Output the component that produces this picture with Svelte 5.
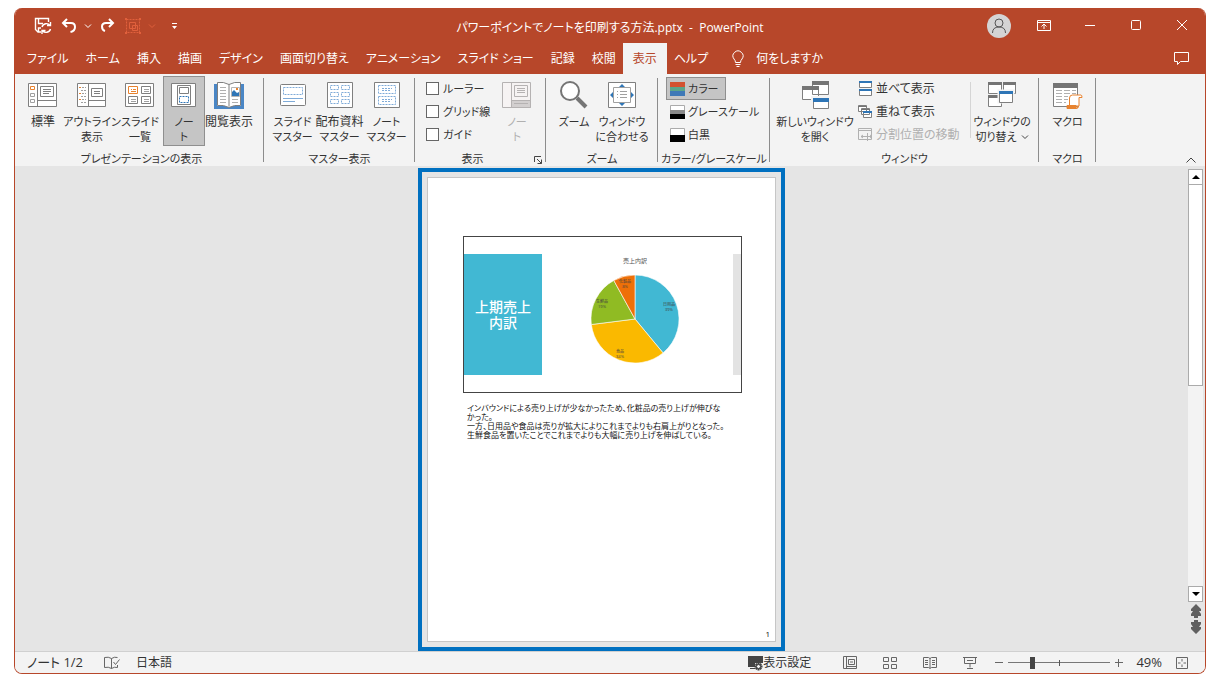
<script lang="ts">
	interface Tool {
		icon: string;
		lines: string[];
		size: string;
		active?: boolean;
		disabled?: boolean;
		menu?: boolean;
	}

	interface Slice {
		name: string;
		share: number;
		color: string;
		x: number;
		y: number;
	}

	const tabs = ['ファイル', 'ホーム', '挿入', '描画', 'デザイン', '画面切り替え', 'アニメーション', 'スライド ショー', '記録', '校閲', '表示', 'ヘルプ'];

	const viewTools: Tool[] = [
		{ icon: 'normal', lines: ['標準'], size: 'm' },
		{ icon: 'outline', lines: ['アウトライン', '表示'], size: 'l' },
		{ icon: 'sorter', lines: ['スライド', '一覧'], size: 's' },
		{ icon: 'notes', lines: ['ノー', 'ト'], size: 'xs', active: true },
		{ icon: 'reading', lines: ['閲覧表示'], size: 'm' }
	];

	const masterTools: Tool[] = [
		{ icon: 'slideMaster', lines: ['スライド', 'マスター'], size: 's' },
		{ icon: 'handoutMaster', lines: ['配布資料', 'マスター'], size: 'm' },
		{ icon: 'notesMaster', lines: ['ノート', 'マスター'], size: 's' }
	];

	const zoomTools: Tool[] = [
		{ icon: 'zoom', lines: ['ズーム'], size: 's' },
		{ icon: 'fit', lines: ['ウィンドウ', 'に合わせる'], size: 'l' }
	];

	const checks = ['ルーラー', 'グリッド線', 'ガイド'];

	const colorModes = [
		{ label: 'カラー', icon: 'color' },
		{ label: 'グレースケール', icon: 'gray' },
		{ label: '白黒', icon: 'mono' }
	];

	const windowTools = [
		{ label: '並べて表示', icon: 'arrange', disabled: false },
		{ label: '重ねて表示', icon: 'cascade', disabled: false },
		{ label: '分割位置の移動', icon: 'split', disabled: true }
	];

	const slices: Slice[] = [
		{ name: '日用品', share: 39, color: '#41b8d3', x: 34, y: -13 },
		{ name: '食品', share: 34, color: '#fab900', x: -15, y: 34 },
		{ name: '生鮮品', share: 19, color: '#90bb23', x: -33, y: -16 },
		{ name: '化粧品', share: 8, color: '#ee7008', x: -10, y: -36 }
	];

	const notes = [
		'インバウンドによる売り上げが少なかったため、化粧品の売り上げが伸びな\nかった。',
		'一方、日用品や食品は売りが拡大によりこれまでよりも右肩上がりとなった。',
		'生鮮食品を置いたことでこれまでよりも大幅に売り上げを伸ばしている。'
	];

	let activeTab = $state('表示');
	let colorMode = $state('カラー');
	let zoomPos = $state(22);

	function point(share: number, r: number): string {
		const a = (share / 100) * Math.PI * 2;
		return `${(Math.sin(a) * r).toFixed(2)} ${(-Math.cos(a) * r).toFixed(2)}`;
	}

	function slicePath(i: number): string {
		const start = slices.slice(0, i).reduce((sum, s) => sum + s.share, 0);
		return `M0 0L${point(start, 44)}A44 44 0 0 1 ${point(start + slices[i].share, 44)}Z`;
	}
</script>

{#snippet bigIcon(name: string)}
	<svg class="big-icon" viewBox="0 0 30 28" width="30" height="28" fill="none" stroke="#7f7f7f" aria-hidden="true">
		{#if name === 'normal'}
			<path fill="#fff" d="M.5 2.5h28v23H.5z" />
			<path d="M9.5 2.5v23M9.5 19.5h19M12.5 5.5h13v10h-13zM15 8.5h8M15 10.5h8M15 12.5h6" />
			<path stroke="#e8822e" d="M2.5 5.5h4v3h-4z" />
			<path stroke="#a0a0a0" d="M2.5 12.5h4v3h-4zM2.5 18.5h4v3h-4z" />
		{:else if name === 'outline'}
			<path fill="#fff" d="M.5 2.5h28v23H.5z" />
			<path d="M11.5 2.5v23M11.5 19.5h17M14.5 7.5h11v8h-11zM17 10.5h6M17 12.5h6" />
			<path stroke="#e8822e" d="M2 6.5h2M2 12.5h2M2 18.5h2" />
			<path stroke="#a0a0a0" stroke-dasharray="2 1" d="M5 6.5h4M4 9.5h5M5 12.5h4M4 15.5h5M5 18.5h4M4 21.5h5" />
		{:else if name === 'sorter'}
			<path fill="#fff" d="M.5 2.5h28v23H.5z" />
			<path stroke="#e8822e" d="M3.5 5.5h9v7h-9zM6 8.5h1M8 8.5h3M6 10.5h5" />
			<path d="M16.5 5.5h9v7h-9zM3.5 15.5h9v7h-9zM16.5 15.5h9v7h-9z" />
			<path stroke="#a0a0a0" d="M19 8.5h5M19 10.5h5M6 18.5h5M6 20.5h5M19 18.5h5M19 20.5h5" />
		{:else if name === 'notes'}
			<path fill="#fff" d="M2.5 2.5h24v23h-24z" />
			<path d="M8.5 4.5h13v19h-13zM10.5 6.5h9v6h-9z" />
			<path stroke="#2e75b6" stroke-dasharray="2 1" d="M10.5 15.5h9v6h-9z" />
		{:else if name === 'reading'}
			<path fill="#4a86c5" stroke="none" d="M0 3h3v22h11q1 2 2 0h11V3h3v25H0z" />
			<path fill="#fff" d="M3.5 1.5q6-1 11.5 2 5.5-3 11.5-2v23q-6-1-11.5 2-5.5-3-11.5-2zM15 3.5v22" />
			<path stroke="#b0b0b0" d="M6 6.5h6M6 9.5h6M6 12.5h6M6 15.5h6M6 18.5h6M6 21.5h6M18 18.5h6M18 21.5h6" />
			<path stroke="#b5b5b5" d="M17.5 6.5h8v9h-8z" />
			<path fill="#2e75b6" stroke="none" d="M18 15v-4l2-2 3 3 2-1v4z" />
			<path fill="#e8822e" stroke="none" d="M22 7h2v2h-2z" />
		{:else if name === 'slideMaster'}
			<rect fill="#fff" x="2.5" y="3.5" width="25" height="21" rx="1" />
			<path stroke="#7fabd8" stroke-dasharray="2 1" d="M5.5 6.5h19v7h-19z" />
			<path stroke="#7fabd8" d="M5 17.5h20M5 20.5h12" />
		{:else if name === 'handoutMaster'}
			<path fill="#fff" d="M2.5 1.5h25v25h-25z" />
			<path stroke="#7fabd8" stroke-dasharray="2 1" d="M5.5 4.5h8v4h-8zM16.5 4.5h8v4h-8zM5.5 11.5h8v4h-8zM16.5 11.5h8v4h-8zM5.5 18.5h8v4h-8zM16.5 18.5h8v4h-8z" />
		{:else if name === 'notesMaster'}
			<path fill="#fff" d="M2.5 1.5h25v25h-25z" />
			<path stroke="#7fabd8" stroke-dasharray="2 1" d="M6.5 4.5h17v8h-17zM6.5 15.5h17v8h-17zM10 7.5h10M10 9.5h8M10 18.5h10M10 20.5h8" />
		{:else if name === 'notesPane'}
			<g stroke="#b5b2b2">
				<path fill="#f6f3f3" d="M.5 1.5h28v25H.5zM9.5 1.5v25M12.5 4.5h13v11h-13zM15 7.5h8M15 9.5h8M15 11.5h8" />
				<path fill="#d2cfcf" d="M9.5 19.5h19v7h-19z" />
				<path d="M12 22.5h14" />
			</g>
		{:else if name === 'zoom'}
			<path stroke="#757575" stroke-width="4" d="M18 17l9 9" />
			<circle fill="#fff" stroke="#757575" stroke-width="2" cx="11" cy="10" r="9" />
		{:else if name === 'fit'}
			<path fill="#fff" d="M1.5 1.5h27v25h-27z" />
			<path stroke="#a0a0a0" d="M6.5 6.5h17v15h-17z" />
			<path stroke="#a0a0a0" d="M10 10.5h1M10 13.5h1M10 16.5h1M13 10.5h7M13 13.5h7M13 16.5h7" />
			<path fill="#2e75b6" stroke="none" d="M15 3l3 3h-6zM15 25l3-3h-6zM3 14l3-3v6zM27 14l-3-3v6z" />
		{:else if name === 'newWindow'}
			<path fill="#fff" d="M12.5.5h16v13h-16zM2.500 5.5h16v13h-16z" />
			<path fill="#757575" stroke="none" d="M12 0h17v4H12zM2 5h17v4H2z" />
			<path fill="#fff" stroke="#f3f3f3" stroke-width="2" d="M12 16h18v12H12z" />
			<path fill="#fff" d="M13.5 17.5h15v10h-15z" />
			<path fill="#2e75b6" stroke="none" d="M13 17h16v4H13z" />
		{:else if name === 'switchWindow'}
			<path fill="#fff" d="M1.5 1.5h13v11h-13zM16.5 1.5h12v11h-12zM1.5 14.5h13v11h-13z" />
			<path fill="#757575" stroke="none" d="M1 1h14v3H1zM16 1h13v3H16zM1 14h14v3H1z" />
			<path fill="#fff" stroke="#f3f3f3" stroke-width="3" d="M12 10h14v11H12z" />
			<path fill="#fff" d="M12.5 10.5h13v11h-13z" />
			<path fill="#2e75b6" stroke="none" d="M12 10h14v3H12z" />
		{:else if name === 'macro'}
			<path fill="#fff" d="M.5 2.5h24v23H.5z" />
			<path fill="#757575" stroke="none" d="M0 2h25v5H0z" />
			<path stroke="#b0b0b0" stroke-dasharray="6 2" d="M3 9.5h20M3 12.5h20M3 15.5h12M3 18.5h12M3 21.5h10" />
			<path fill="#fff" stroke="#e8822e" d="M16.5 25v-8q0-3 3-3h8.5q1 0 1 2.5h-3V25z" />
			<path fill="#e8822e" stroke="#e8822e" d="M14 24.5h9v3h-9zM23 27.5q2.5 0 2.5-2.5" />
		{/if}
	</svg>
{/snippet}

{#snippet smallIcon(name: string)}
	<svg viewBox="0 0 16 16" width="16" height="16" fill="none" stroke="#7f7f7f" aria-hidden="true">
		{#if name === 'color'}
			<g stroke="none">
				<path fill="#d35230" d="M0 1h15v5H0z" />
				<path fill="#5ba58a" d="M0 6h15v4H0z" />
				<path fill="#3f79b7" d="M0 10h15v5H0z" />
			</g>
		{:else if name === 'gray'}
			<path fill="#fff" stroke="#ababab" d="M.5 1.5h14v5H.5z" />
			<g stroke="none">
				<path fill="#8a8a8a" d="M0 6h15v4H0z" />
				<path fill="#000" d="M0 10h15v5H0z" />
			</g>
		{:else if name === 'mono'}
			<path fill="#fff" stroke="#ababab" d="M.5 1.5h14v7H.5z" />
			<path fill="#000" stroke="none" d="M0 8h15v7H0z" />
		{:else if name === 'arrange'}
			<path fill="#fff" d="M1.5.5h12v6h-12zM1.5 8.5h12v6h-12z" />
			<path fill="#2e75b6" stroke="none" d="M1 0h13v2H1zM1 8h13v2H1z" />
		{:else if name === 'cascade'}
			<path fill="#fff" d="M.5 1.5h8v6h-8zM3.5 4.5h8v6h-8zM5.5 7.5h8v6h-8z" />
			<path stroke="#757575" d="M0 2.5h9M3 5.5h9" />
			<path stroke="#2e75b6" stroke-width="2" d="M5 8h9" />
		{:else if name === 'split'}
			<path stroke="#b0b0b0" d="M.5 1.5h13v11H.5zM1 3.5h12" />
			<path fill="#f3f3f3" stroke="#b0b0b0" d="M3 9.5h11M9.5 6v8M5 8l-2 1.5L5 11M12 8l2 1.5-2 1.5" />
		{/if}
	</svg>
{/snippet}

{#snippet tool(t: Tool)}
	<button class="tool {t.size}" class:active={t.active} disabled={t.disabled}>
		{@render bigIcon(t.icon)}
		{#each t.lines as line, i}
			<span>
				{line}{#if t.menu && i === t.lines.length - 1}<svg class="caret" viewBox="0 0 8 8" width="8" height="8" fill="none" stroke="#444"><path d="M1 2.5l3 3 3-3" /></svg>{/if}
			</span>
		{/each}
	</button>
{/snippet}

<div class="desktop">
	<div class="window">
		<header class="titlebar">
			<div class="quick">
				<button aria-label="上書き保存">
					<svg viewBox="0 0 18 18" width="18" height="18" fill="none" stroke="#fff" stroke-width="1.4">
						<path d="M7 15H4L1.5 12.5V1.5h13V5M4.5 1.5v5H9M4.5 15v-4H7" />
						<path d="M8 10a4.500 4.500 0 0 1 8-1.500M16.500 12a4.500 4.500 0 0 1-8 1.500M16.500 5v3.500H13M8 17v-3.500h3.500" />
					</svg>
				</button>
				<button aria-label="元に戻す">
					<svg viewBox="0 0 18 18" width="18" height="18" fill="none" stroke="#fff" stroke-width="2">
						<path d="M7 2L3 6l4 4M3.5 6H11q4 0 4 4t-4.5 5" />
					</svg>
				</button>
				<button class="drop" aria-label="元に戻す履歴">
					<svg viewBox="0 0 8 8" width="8" height="8" fill="none" stroke="#fff"><path d="M1 2.5l3 3 3-3" /></svg>
				</button>
				<button aria-label="やり直し">
					<svg viewBox="0 0 18 18" width="18" height="18" fill="none" stroke="#fff" stroke-width="2">
						<path d="M11 2l4 4-4 4M14.5 6H8Q4 6 4 9.5T7 14" />
					</svg>
				</button>
				<button aria-label="グループ化">
					<svg viewBox="0 0 18 18" width="18" height="18" fill="none" stroke="#e0603c">
						<path stroke-dasharray="2 1" d="M2.5 2.5h13v13h-13z" />
						<path d="M5.5 5.5h6v6h-6zM8.500 8.5h5v5h-5z" />
						<path stroke-width="2" d="M1 2h2M15 2h2M1 16h2M15 16h2" />
					</svg>
				</button>
				<button class="drop" aria-label="グループ化の種類">
					<svg viewBox="0 0 8 8" width="8" height="8" fill="none" stroke="#e0603c"><path d="M1 2.5l3 3 3-3" /></svg>
				</button>
				<button class="customize" aria-label="クイック アクセス ツール バーのユーザー設定">
					<svg viewBox="0 0 8 8" width="8" height="8" fill="#fff"><path d="M2 1h5v1H2zM2 4h5L4.5 7z" /></svg>
				</button>
			</div>
			<h1>パワーポイントでノートを印刷する方法.pptx&nbsp; -&nbsp; PowerPoint</h1>
			<div class="controls">
				<button class="avatar" aria-label="アカウント">
					<svg viewBox="0 0 24 24" width="24" height="24" fill="none" stroke="#555">
						<circle fill="#d4d4d4" stroke="none" cx="12" cy="12" r="12" />
						<circle cx="12" cy="9" r="4" />
						<path d="M5.5 19q0-6 6.5-6t6.5 6" />
					</svg>
				</button>
				<button aria-label="リボンの表示オプション">
					<svg viewBox="0 0 14 14" width="14" height="14" fill="none" stroke="#fff">
						<path d="M.5 1.5h13v10H.5zM.5 3.5h13M7 10V5M4.5 7.5L7 5l2.5 2.5" />
					</svg>
				</button>
				<button aria-label="最小化">
					<svg viewBox="0 0 14 14" width="14" height="14" stroke="#fff"><path d="M2 6.5h10" /></svg>
				</button>
				<button aria-label="最大化">
					<svg viewBox="0 0 14 14" width="14" height="14" fill="none" stroke="#fff"><rect x="2.5" y="1.5" width="9" height="9" rx="1" /></svg>
				</button>
				<button aria-label="閉じる">
					<svg viewBox="0 0 14 14" width="14" height="14" stroke="#fff"><path d="M2 1l10 10M12 1L2 11" /></svg>
				</button>
			</div>
		</header>

		<nav class="tabs">
			{#each tabs as tab}
				<button class="tab" class:selected={tab === activeTab} onclick={() => (activeTab = tab)}>{tab}</button>
			{/each}
			<button class="tab ask">
				<svg viewBox="0 0 14 18" width="14" height="18" fill="none" stroke="#fff">
					<path d="M4.5 12.5q0-2-1.5-3.5a5 5 0 1 1 8 0q-1.5 1.5-1.5 3.5zM4.5 14.5h5M5.500 16.5h3" />
				</svg>
				何をしますか
			</button>
			<button class="comment" aria-label="コメント">
				<svg viewBox="0 0 16 16" width="16" height="16" fill="none" stroke="#fff"><path d="M.5 1.5h14v9h-8l-3 3v-3h-3z" /></svg>
			</button>
		</nav>

		<div class="ribbon">
			<section class="group presentation">
				<div class="tools">
					{#each viewTools as t}
						{@render tool(t)}
					{/each}
				</div>
				<h2>プレゼンテーションの表示</h2>
			</section>
			<section class="group master">
				<div class="tools">
					{#each masterTools as t}
						{@render tool(t)}
					{/each}
				</div>
				<h2>マスター表示</h2>
			</section>
			<section class="group show">
				<div class="tools">
					<div class="rows kana">
						{#each checks as label}
							<label class="row check"><input type="checkbox" />{label}</label>
						{/each}
					</div>
					{@render tool({ icon: 'notesPane', lines: ['ノー', 'ト'], size: 'xs', disabled: true })}
				</div>
				<h2>
					表示
					<button class="launcher" aria-label="グリッドとガイド">
						<svg viewBox="0 0 10 10" width="10" height="10" fill="none" stroke="#444"><path d="M1.5 7V1.5H8M4 4l4.5 4.5M8.5 4.5v4h-4" /></svg>
					</button>
				</h2>
			</section>
			<section class="group zooming">
				<div class="tools">
					{#each zoomTools as t}
						{@render tool(t)}
					{/each}
				</div>
				<h2>ズーム</h2>
			</section>
			<section class="group colors">
				<div class="tools">
					<div class="rows kana">
						{#each colorModes as mode}
							<button class="row" class:active={mode.label === colorMode} onclick={() => (colorMode = mode.label)}>
								{@render smallIcon(mode.icon)}{mode.label}
							</button>
						{/each}
					</div>
				</div>
				<h2>カラー/グレースケール</h2>
			</section>
			<section class="group windows">
				<div class="tools">
					{@render tool({ icon: 'newWindow', lines: ['新しいウィンドウ', 'を開く'], size: 'xl' })}
					<div class="rows">
						{#each windowTools as w}
							<button class="row" disabled={w.disabled}>{@render smallIcon(w.icon)}{w.label}</button>
						{/each}
					</div>
					<div class="thin"></div>
					{@render tool({ icon: 'switchWindow', lines: ['ウィンドウの', '切り替え'], size: 'l', menu: true })}
				</div>
				<h2>ウィンドウ</h2>
			</section>
			<section class="group macros">
				<div class="tools">
					{@render tool({ icon: 'macro', lines: ['マクロ'], size: 's' })}
				</div>
				<h2>マクロ</h2>
			</section>
			<button class="collapse" aria-label="リボンを折りたたむ">
				<svg viewBox="0 0 12 8" width="12" height="8" fill="none" stroke="#444"><path d="M1.5 6.5L6 2l4.5 4.5" /></svg>
			</button>
		</div>

		<main>
			<div class="canvas">
				<div class="highlight">
					<article class="page">
						<div class="slide">
							<div class="panel">上期売上<br />内訳</div>
							<figure>
								<figcaption>売上内訳</figcaption>
								<svg viewBox="-45 -45 90 90" width="90" height="90">
									{#each slices as s, i}
										<path d={slicePath(i)} fill={s.color} stroke="#fff" stroke-opacity=".6" />
									{/each}
									{#each slices as s}
										<text x={s.x} y={s.y}>{s.name}<tspan x={s.x} dy="5">{s.share}%</tspan></text>
									{/each}
								</svg>
							</figure>
							<div class="strip"></div>
						</div>
						<div class="notes">
							{#each notes as n}
								<p>{n}</p>
							{/each}
						</div>
						<footer>1</footer>
					</article>
				</div>
			</div>
			<div class="scroll">
				<button class="arrow" aria-label="上へ"><svg viewBox="0 0 8 6" width="8" height="6"><path d="M0 5l4-4 4 4z" /></svg></button>
				<div class="track"><div class="thumb"></div></div>
				<button class="arrow" aria-label="下へ"><svg viewBox="0 0 8 6" width="8" height="6"><path d="M0 1l4 4 4-4z" /></svg></button>
				<button class="jump" aria-label="前のスライド"><svg viewBox="0 0 10 14" width="10" height="14" fill="#606060"><path d="M5 0l5 5v2H8l2 3v2H7v2H3v-2H0v-2l2-3H0V5z" /></svg></button>
				<button class="jump" aria-label="次のスライド"><svg viewBox="0 0 10 14" width="10" height="14" fill="#606060"><path d="M5 14l5-5V7H8l2-3V2H7V0H3v2H0v2l2 3H0v2z" /></svg></button>
			</div>
		</main>

		<footer class="status">
			<span class="count">ノート 1/2</span>
			<button class="proof" aria-label="スペル チェック">
				<svg viewBox="0 0 16 14" width="16" height="14"><path d="M7.5 2.5q-3-2-7-1v10q4-1 7 1 3-2 6-1V9M7.5 2.5v10M7.5 2.5q3-2 6-1M9.5 6l2 2.5 4-5" /></svg>
			</button>
			<span>日本語</span>
			<button class="display">
				<svg viewBox="0 0 16 16" width="16" height="16"><path d="M1 1h15v7H8v4H1zM3 13h5v1H3z" /><path class="gear" d="M11.500 7.500v8M7.500 11.500h8M8.700 8.700l5.600 5.600M14.300 8.700l-5.600 5.600" /><circle class="hub" cx="11.500" cy="11.500" r="2" /></svg>表示設定
			</button>
			<div class="views">
				<button aria-label="標準">
					<svg viewBox="0 0 16 14" width="16" height="14"><path d="M1.5.5h13v12h-13zM4.5.5v12M6.5 3.5h6v5h-6zM4.5 10.5h10M8 6h3" /></svg>
				</button>
				<button aria-label="スライド一覧">
					<svg viewBox="0 0 16 14" width="16" height="14"><path d="M1.5 1.5h5v4h-5zM9.5 1.5h5v4h-5zM1.5 8.5h5v4h-5zM9.5 8.5h5v4h-5z" /></svg>
				</button>
				<button aria-label="閲覧表示">
					<svg viewBox="0 0 16 14" width="16" height="14"><path d="M1.5 1.5h5L8 2.5l1.5-1h5v10h-5L8 12.5l-1.5-1h-5zM8 2v10M3 4.5h3M3 6.5h3M3 8.5h3M10 4.5h3M10 6.5h3M10 8.5h3" /></svg>
				</button>
				<button aria-label="スライド ショー">
					<svg viewBox="0 0 16 14" width="16" height="14"><path d="M1 1.5h14M2.5 1.5v6h11v-6M5 4.5h6M8 7.5v4M5 12.5h6" /></svg>
				</button>
			</div>
			<div class="zoom">
				<button aria-label="縮小"><svg viewBox="0 0 10 10" width="10" height="10"><path d="M1 4.5h8" /></svg></button>
				<input type="range" min="0" max="100" bind:value={zoomPos} aria-label="ズーム" />
				<button aria-label="拡大"><svg viewBox="0 0 10 10" width="10" height="10"><path d="M1 4.5h8M4.5 1v8" /></svg></button>
			</div>
			<span class="percent">49%</span>
			<button aria-label="ウィンドウに合わせる">
				<svg viewBox="0 0 12 12" width="12" height="12"><path d="M.5.5h11v11H.5zM6 2v2.5M6 7.5V10M2 6h2.5M7.500 6H10" /></svg>
			</button>
		</footer>
	</div>
</div>

<style>
	:global(body) {
		margin: 0;
		background: #fff;
		color: #333;
		font-family: 'Open Sans', 'Noto Sans CJK JP', sans-serif;
		font-size: 12px;
		line-height: 15px;
		font-feature-settings: 'palt';
	}

	button {
		display: flex;
		align-items: center;
		justify-content: center;
		margin: 0;
		padding: 0;
		border: 0;
		background: none;
		color: inherit;
		font: inherit;
		font-feature-settings: inherit;
		white-space: nowrap;
	}

	svg {
		display: block;
		flex: none;
	}

	h1,
	h2,
	p,
	figure {
		margin: 0;
		font-size: inherit;
		font-weight: 400;
	}

	.desktop {
		display: flex;
		box-sizing: border-box;
		min-height: 100vh;
		padding: 8px 14px;
	}

	.window {
		flex: 1;
		display: flex;
		flex-direction: column;
		min-width: 0;
		overflow: hidden;
		border: 1px solid #b7472a;
		border-top: 0;
		border-radius: 8px;
		background: #f3f3f3;
	}

	.titlebar {
		display: grid;
		grid-template-columns: 1fr auto 1fr;
		height: 35px;
		background: #b7472a;
		color: #fff;
	}

	.quick {
		display: flex;
		align-items: center;
		gap: 4px;
		padding-left: 17px;
	}

	.quick button {
		width: 22px;
		height: 24px;
	}

	.quick .drop {
		width: 8px;
	}

	.quick .customize {
		margin-left: 6px;
		width: 16px;
	}

	h1 {
		align-self: center;
		padding-top: 3px;
	}

	.controls {
		display: flex;
		justify-content: flex-end;
		align-items: center;
	}

	.controls button {
		width: 46px;
		height: 32px;
	}

	.controls .avatar {
		width: 24px;
		margin-right: 10px;
	}

	.tabs {
		display: flex;
		gap: 1px;
		height: 31px;
		padding-left: 4px;
		background: #b7472a;
		color: #fff;
	}

	.tab {
		padding: 0 8px;
	}

	.tab.selected {
		margin: 0 -2px;
		padding: 0 10px;
		background: #f3f3f3;
		color: #b7472a;
	}

	.ask {
		gap: 11px;
		padding-left: 14px;
	}

	.comment {
		width: 46px;
		margin-left: auto;
	}

	.ribbon {
		display: flex;
		height: 90px;
		padding-top: 2px;
		background: #f3f3f3;
	}

	.group {
		position: relative;
		display: flex;
		flex-direction: column;
		flex: none;
	}

	.group::after {
		content: '';
		position: absolute;
		top: 2px;
		right: 0;
		bottom: 4px;
		width: 1px;
		background: #8c8c8c;
	}

	.tools {
		display: flex;
		height: 70px;
	}

	h2 {
		position: relative;
		margin-top: 5px;
		font-size: 11px;
		text-align: center;
		white-space: nowrap;
	}

	.presentation {
		width: 245px;
		padding-left: 4px;
	}

	.master {
		width: 151px;
	}

	.master .tools,
	.macros .tools {
		justify-content: center;
	}

	.show {
		width: 131px;
	}

	.show .tools {
		padding: 0 8px 0 11px;
		justify-content: space-between;
	}

	.show h2 {
		padding-right: 16px;
	}

	.launcher {
		position: absolute;
		right: 3px;
		bottom: 1px;
	}

	.zooming {
		width: 112px;
	}

	.zooming .tools {
		padding-left: 5px;
	}

	.colors {
		width: 112px;
	}

	.colors .tools {
		padding-left: 8px;
	}

	.windows {
		width: 269px;
	}

	.windows .tools {
		padding-left: 6px;
	}

	.macros {
		width: 57px;
	}

	.tool {
		box-sizing: border-box;
		flex: none;
		flex-direction: column;
		justify-content: flex-start;
		padding-top: 4px;
		border: 1px solid transparent;
		font-size: 11px;
	}

	.tool .big-icon {
		margin-bottom: 5px;
	}

	.tool span {
		display: flex;
		align-items: center;
		height: 15px;
	}

	.xs {
		width: 42px;
	}

	.s {
		width: 46px;
	}

	.m {
		width: 48px;
		font-size: 12px;
	}

	.m span + span {
		font-size: 11px;
	}

	.l {
		width: 50px;
	}

	.xl {
		width: 78px;
	}

	.caret {
		margin-left: 4px;
	}

	.active {
		border-color: #8f8f8f;
		background: #c5c5c5;
	}

	button:disabled {
		color: #b0b0b0;
	}

	.rows {
		display: flex;
		flex-direction: column;
		align-items: flex-start;
		padding-top: 1px;
	}

	.kana {
		font-size: 11px;
	}

	.row {
		box-sizing: border-box;
		display: flex;
		align-items: center;
		gap: 2px;
		height: 23px;
		padding: 0 6px 0 3px;
		border: 1px solid transparent;
		white-space: nowrap;
	}

	.row.active {
		border-color: #8f8f8f;
	}

	.check {
		gap: 4px;
		padding: 0;
		border: 0;
	}

	.check input {
		appearance: none;
		box-sizing: border-box;
		width: 13px;
		height: 13px;
		margin: 0;
		border: 1px solid #666;
		background: #fff;
	}

	.thin {
		width: 1px;
		margin: 6px 6px 8px auto;
		background: #d5d5d5;
	}

	.windows .l {
		margin-right: 12px;
	}

	.collapse {
		align-self: flex-end;
		margin: 0 8px 2px auto;
	}

	main {
		flex: 1;
		display: flex;
		background: #e5e5e5;
	}

	.canvas {
		flex: 1;
		display: flex;
		justify-content: center;
		padding-top: 2px;
	}

	.highlight {
		display: flex;
		box-sizing: border-box;
		width: 367px;
		padding: 5px;
		border: 4px solid #0070c0;
	}

	.page {
		flex: 1;
		display: flex;
		flex-direction: column;
		padding: 58px 33px 0 35px;
		border: 1px solid #c6c6c6;
		background: #fff;
		color: #111;
	}

	.slide {
		display: flex;
		justify-content: space-between;
		padding: 17px 0;
		border: 1px solid #444;
	}

	.panel {
		display: flex;
		align-items: center;
		justify-content: center;
		width: 78px;
		height: 121px;
		background: #41b8d3;
		color: #fff;
		font-size: 14px;
		font-weight: 500;
		line-height: 16px;
		text-align: center;
	}

	figure {
		display: flex;
		flex-direction: column;
		align-items: center;
		margin-right: 5px;
	}

	figcaption {
		height: 20px;
		color: #555;
		font-size: 6px;
	}

	figure text {
		font-size: 4px;
		fill: #404040;
		text-anchor: middle;
	}

	.strip {
		width: 8px;
		background: #e3e3e3;
	}

	.notes {
		padding: 10px 4px;
		font-size: 8px;
		line-height: 9px;
		white-space: pre-line;
	}

	.page footer {
		margin: auto -28px 0 0;
		font-size: 8px;
		text-align: right;
	}

	.scroll {
		display: flex;
		flex-direction: column;
		align-items: flex-start;
		width: 17px;
		padding: 3px 0 17px;
	}

	.arrow {
		box-sizing: border-box;
		width: 15px;
		height: 16px;
		border: 1px solid #ababab;
		background: #fff;
	}

	.track {
		flex: 1;
		width: 15px;
		background: #f3f3f3;
	}

	.thumb {
		box-sizing: border-box;
		height: 50%;
		border: 1px solid #ababab;
		border-top: 0;
		background: #fff;
	}

	.jump {
		width: 15px;
		margin-top: 2px;
	}

	.status {
		display: flex;
		align-items: center;
		height: 21px;
		padding: 0 17px 0 12px;
		border-top: 1px solid #d0d0d0;
		background: #f3f3f3;
	}

	.status svg {
		fill: none;
		stroke: #666;
	}

	.status .display svg {
		fill: #444;
		stroke: none;
	}

	.gear {
		stroke: #444;
		stroke-width: 2;
	}

	.hub {
		fill: #f3f3f3;
		stroke: #444;
	}

	.proof {
		margin: 0 16px 0 21px;
	}

	.display {
		margin-left: auto;
	}

	.views {
		display: flex;
		gap: 24px;
		margin: 0 16px 0 31px;
	}

	.zoom {
		display: flex;
		align-items: center;
		gap: 4px;
	}

	.zoom input {
		appearance: none;
		width: 102px;
		height: 12px;
		margin: 0;
		background:
			linear-gradient(#555, #555) center / 1px 6px no-repeat,
			linear-gradient(#777, #777) center / 100% 1px no-repeat;
	}

	.zoom input::-webkit-slider-thumb {
		appearance: none;
		width: 5px;
		height: 12px;
		background: #444;
	}

	.percent {
		margin: 0 14px 0 12px;
	}

	.count,
	.percent {
		font-size: 13px;
	}
</style>
